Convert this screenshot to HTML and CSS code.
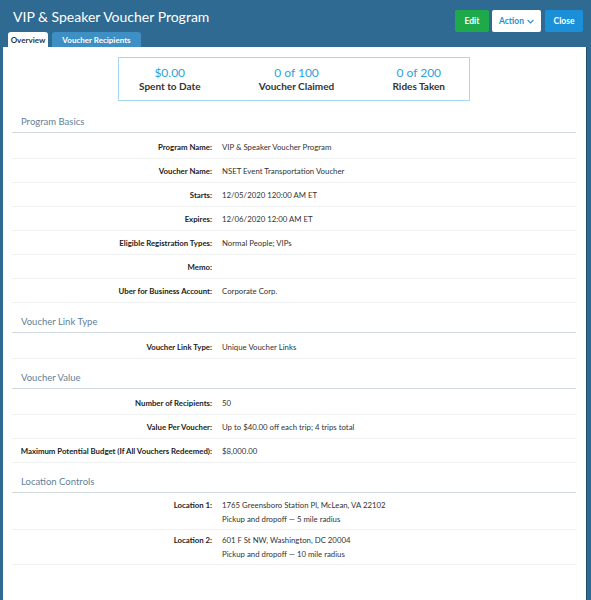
FILE: index.html
```html
<!DOCTYPE html>
<html>
<head>
<meta charset="utf-8">
<link rel="stylesheet" href="styles.css">
</head>
<body>
<div class="frame">
  <header class="top">
    <div class="title-row">
      <h1 class="title">VIP &amp; Speaker Voucher Program</h1>
      <div class="actions">
        <button class="btn btn-edit">Edit</button>
        <button class="btn btn-action">Action <svg class="chev" width="7" height="5" viewBox="0 0 7 5"><path d="M0.6 1 L3.5 3.9 L6.4 1" fill="none" stroke="#2a8fd0" stroke-width="1.1"/></svg></button>
        <button class="btn btn-close">Close</button>
      </div>
    </div>
    <nav class="tabs">
      <span class="tab tab-active">Overview</span>
      <span class="tab">Voucher Recipients</span>
    </nav>
  </header>
  <main class="panel">
    <div class="stats">
      <div class="stat"><div class="stat-val">$0.00</div><div class="stat-lbl">Spent to Date</div></div>
      <div class="stat"><div class="stat-val">0 of 100</div><div class="stat-lbl">Voucher Claimed</div></div>
      <div class="stat"><div class="stat-val">0 of 200</div><div class="stat-lbl">Rides Taken</div></div>
    </div>

    <section class="section">
      <h2 class="sec-head">Program Basics</h2>
      <div class="rows">
        <div class="row"><div class="lbl">Program Name:</div><div class="val">VIP &amp; Speaker Voucher Program</div></div>
        <div class="row"><div class="lbl">Voucher Name:</div><div class="val">NSET Event Transportation Voucher</div></div>
        <div class="row"><div class="lbl">Starts:</div><div class="val">12/05/2020 120:00 AM ET</div></div>
        <div class="row"><div class="lbl">Expires:</div><div class="val">12/06/2020 12:00 AM ET</div></div>
        <div class="row"><div class="lbl">Eligible Registration Types:</div><div class="val">Normal People; VIPs</div></div>
        <div class="row"><div class="lbl">Memo:</div><div class="val"></div></div>
        <div class="row"><div class="lbl">Uber for Business Account:</div><div class="val">Corporate Corp.</div></div>
      </div>
    </section>

    <section class="section">
      <h2 class="sec-head">Voucher Link Type</h2>
      <div class="rows">
        <div class="row"><div class="lbl">Voucher Link Type:</div><div class="val">Unique Voucher Links</div></div>
      </div>
    </section>

    <section class="section">
      <h2 class="sec-head">Voucher Value</h2>
      <div class="rows">
        <div class="row"><div class="lbl">Number of Recipients:</div><div class="val">50</div></div>
        <div class="row"><div class="lbl">Value Per Voucher:</div><div class="val">Up to $40.00 off each trip; 4 trips total</div></div>
        <div class="row"><div class="lbl">Maximum Potential Budget (If All Vouchers Redeemed):</div><div class="val">$8,000.00</div></div>
      </div>
    </section>

    <section class="section">
      <h2 class="sec-head">Location Controls</h2>
      <div class="rows">
        <div class="row row-tall"><div class="lbl">Location 1:</div><div class="val">1765 Greensboro Station Pl, McLean, VA 22102<br>Pickup and dropoff — 5 mile radius</div></div>
        <div class="row row-tall"><div class="lbl">Location 2:</div><div class="val">601 F St NW, Washington, DC 20004<br>Pickup and dropoff — 10 mile radius</div></div>
      </div>
    </section>
  </main>
</div>
</body>
</html>
```

FILE: styles.css
```css
* { box-sizing: border-box; }
html, body { margin: 0; padding: 0; }
body {
  background: #2f6a92;
  font-family: "Lato", "Open Sans", sans-serif;
  color: #333;
  height: 600px;
  overflow: hidden;
}
.frame { display: flex; flex-direction: column; height: 100%; }

.title-row {
  display: flex;
  align-items: flex-start;
  justify-content: space-between;
  padding: 10px 8px 0 13px;
  height: 32px;
}
.title {
  margin: 0;
  font-size: 14px;
  font-weight: 400;
  color: #fff;
  line-height: 14px;
}
.actions { display: flex; gap: 3px; }
.btn {
  height: 22px;
  border: none;
  border-radius: 2px;
  font-family: inherit;
  font-size: 8.5px;
  font-weight: 700;
  padding: 0;
  display: flex;
  align-items: center;
  justify-content: center;
  gap: 3px;
  cursor: pointer;
}
.btn-edit { background: #1ea94b; color: #fff; width: 34px; }
.btn-action { background: #fff; color: #2a8fd0; width: 49px; margin-right: 1px; }
.btn-close { background: #1b90d9; color: #fff; width: 38px; }
.chev { margin-top: 1px; }

.tabs { display: flex; gap: 4px; padding-left: 8px; height: 15px; }
.tab {
  display: flex;
  align-items: center;
  justify-content: center;
  height: 15px;
  font-size: 8px;
  font-weight: 700;
  color: #fff;
  background: #3e8fc3;
  border-radius: 3px 3px 0 0;
  width: 89px;
}
.tab-active { background: #fff; color: #1f3547; width: 40px; }

.panel {
  flex: 1;
  background: #fff;
  margin: 0 4px 0 3px;
  padding: 0 10px 0 9px;
  border-right: 1px solid #1f4e6e;
}

.stats {
  width: 352px;
  height: 44px;
  margin: 10px auto 0;
  border: 1px solid #a6d8f3;
  display: flex;
  justify-content: space-between;
  align-items: center;
  padding: 0 24px 1px 20px;
}
.stat { text-align: center; }
.stat-val { color: #2aa4e1; font-size: 12px; line-height: 14px; }
.stat-lbl { color: #333; font-size: 10px; font-weight: 700; line-height: 12px; }

.sec-head {
  margin: 0;
  font-size: 9.5px;
  font-weight: 400;
  color: #5f7f98;
  line-height: 12px;
  padding: 13px 0 4px 9px;
  border-bottom: 1.5px solid #cfd8de;
}
.section:first-of-type .sec-head { padding-top: 15px; }
.rows { padding-top: 2px; }
.row {
  display: flex;
  height: 24px;
  align-items: center;
  border-bottom: 1px solid #eef0f2;
  font-size: 7.8px;
  line-height: 14px;
}
.row-tall { height: 35px; align-items: flex-start; padding-top: 3px; }
.lbl {
  width: 200px;
  flex: none;
  text-align: right;
  font-weight: 700;
  color: #222;
  white-space: nowrap;
}
.val { padding-left: 10px; color: #333; }
```
